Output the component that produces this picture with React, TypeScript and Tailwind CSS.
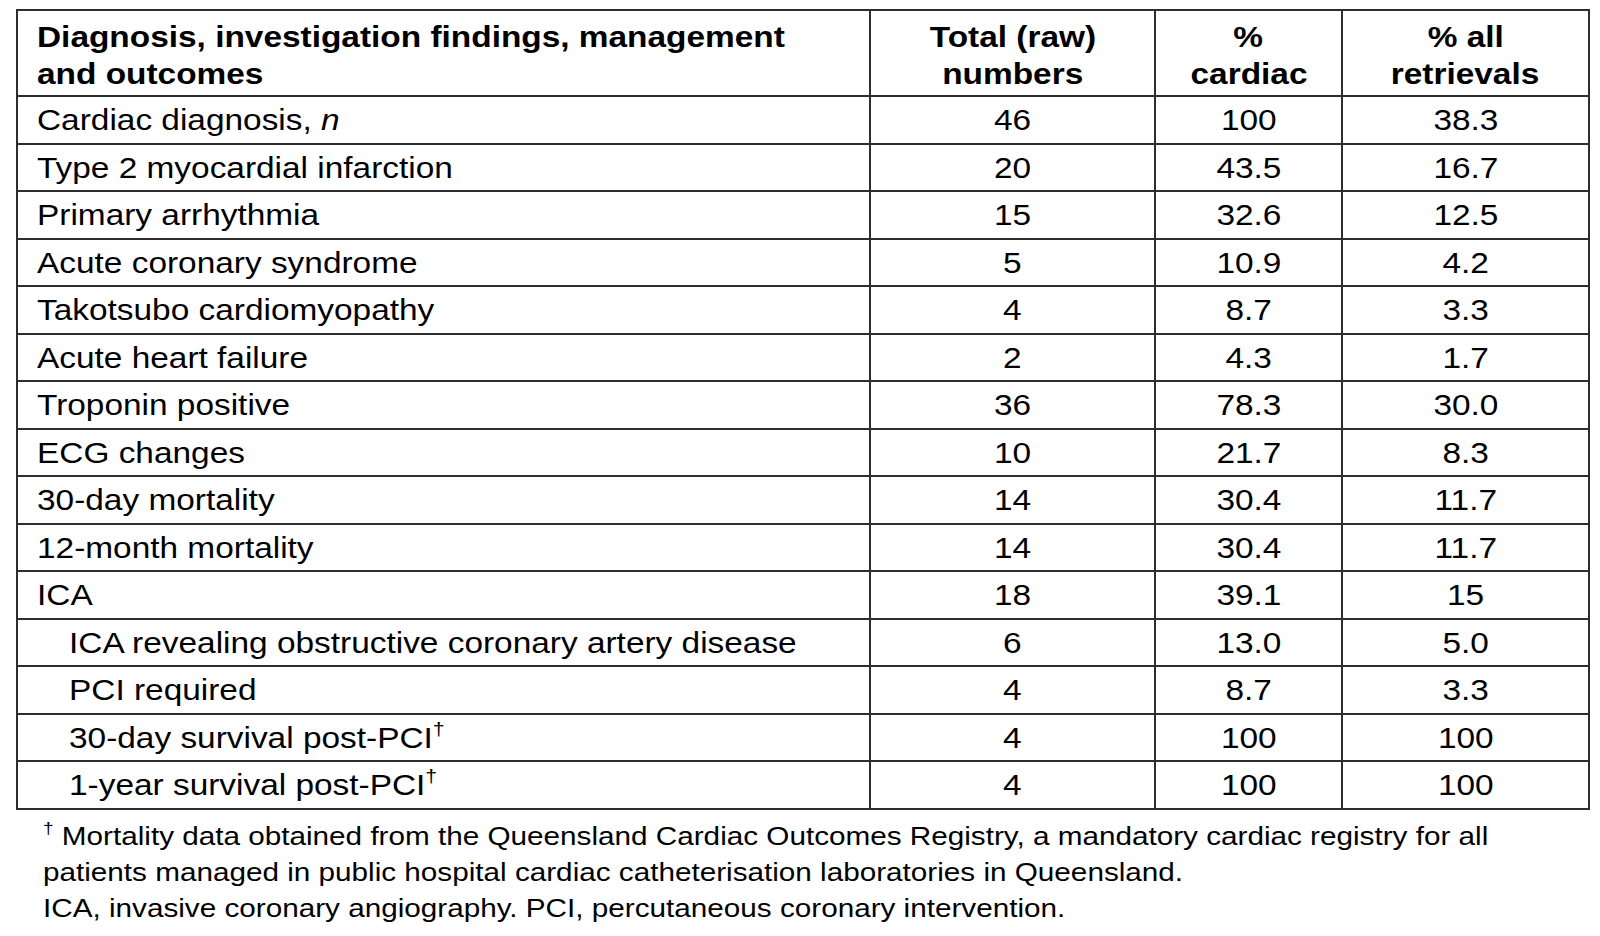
import React from 'react';

interface Row {
  label: React.ReactNode;
  total: string;
  cardiac: string;
  all: string;
  indent?: boolean;
}

const Dagger: React.FC = () => (
  <sup className="relative -top-[2px] text-[19px] leading-none align-super">†</sup>
);

const rows: Row[] = [
  { label: <>Cardiac diagnosis, <i>n</i></>, total: '46', cardiac: '100', all: '38.3' },
  { label: 'Type 2 myocardial infarction', total: '20', cardiac: '43.5', all: '16.7' },
  { label: 'Primary arrhythmia', total: '15', cardiac: '32.6', all: '12.5' },
  { label: 'Acute coronary syndrome', total: '5', cardiac: '10.9', all: '4.2' },
  { label: 'Takotsubo cardiomyopathy', total: '4', cardiac: '8.7', all: '3.3' },
  { label: 'Acute heart failure', total: '2', cardiac: '4.3', all: '1.7' },
  { label: 'Troponin positive', total: '36', cardiac: '78.3', all: '30.0' },
  { label: 'ECG changes', total: '10', cardiac: '21.7', all: '8.3' },
  { label: '30-day mortality', total: '14', cardiac: '30.4', all: '11.7' },
  { label: '12-month mortality', total: '14', cardiac: '30.4', all: '11.7' },
  { label: 'ICA', total: '18', cardiac: '39.1', all: '15' },
  { label: 'ICA revealing obstructive coronary artery disease', total: '6', cardiac: '13.0', all: '5.0', indent: true },
  { label: 'PCI required', total: '4', cardiac: '8.7', all: '3.3', indent: true },
  { label: <>30-day survival post-PCI<Dagger /></>, total: '4', cardiac: '100', all: '100', indent: true },
  { label: <>1-year survival post-PCI<Dagger /></>, total: '4', cardiac: '100', all: '100', indent: true },
];

// the source figure is stretched sideways, so glyphs get a horizontal scale
const wide = 'inline-block scale-x-[1.125]';
const cell = 'flex items-center border-r-2 border-b-2 border-[#2e2e2e] h-[47.5px]';
const numCell = `${cell} justify-center`;
const note = 'inline-block origin-left scale-x-[1.12] whitespace-nowrap';

const App: React.FC = () => {
  return (
    <div className="min-h-screen w-full bg-white text-black font-['Liberation_Sans',Arial,sans-serif]">
      <div className="pt-[9px] pl-[16px]">
        <div className="grid w-[1574px] grid-cols-[853px_285px_187px_247px] border-l-2 border-t-2 border-[#2e2e2e] text-[29.7px] leading-[37px]">
          <div className="flex h-[86px] flex-col justify-center border-r-2 border-b-2 border-[#2e2e2e] pl-[19px] pt-[3px] font-bold">
            <span className={`${wide} origin-left`}>Diagnosis, investigation findings, management</span>
            <span className={`${wide} origin-left`}>and outcomes</span>
          </div>
          <div className="flex h-[86px] flex-col items-center justify-center border-r-2 border-b-2 border-[#2e2e2e] pt-[3px] font-bold">
            <span className={wide}>Total (raw)</span>
            <span className={wide}>numbers</span>
          </div>
          <div className="flex h-[86px] flex-col items-center justify-center border-r-2 border-b-2 border-[#2e2e2e] pt-[3px] font-bold">
            <span className={wide}>%</span>
            <span className={wide}>cardiac</span>
          </div>
          <div className="flex h-[86px] flex-col items-center justify-center border-r-2 border-b-2 border-[#2e2e2e] pt-[3px] font-bold">
            <span className={wide}>% all</span>
            <span className={wide}>retrievals</span>
          </div>

          {rows.map((r, i) => (
            <React.Fragment key={i}>
              <div className={`${cell} ${r.indent ? 'pl-[51px]' : 'pl-[19px]'}`}>
                <span className={`${wide} origin-left whitespace-nowrap`}>{r.label}</span>
              </div>
              <div className={numCell}>
                <span className={wide}>{r.total}</span>
              </div>
              <div className={numCell}>
                <span className={wide}>{r.cardiac}</span>
              </div>
              <div className={numCell}>
                <span className={wide}>{r.all}</span>
              </div>
            </React.Fragment>
          ))}
        </div>

        <div className="mt-[8px] pl-[27px] text-[26.5px] leading-[36px]">
          <div>
            <span className={note}>
              <sup className="relative -top-[1px] text-[17px] leading-none align-super">†</sup> Mortality data obtained from the Queensland Cardiac Outcomes Registry, a mandatory cardiac registry for all
            </span>
          </div>
          <div>
            <span className={note}>
              patients managed in public hospital cardiac catheterisation laboratories in Queensland.
            </span>
          </div>
          <div>
            <span className={note}>
              ICA, invasive coronary angiography. PCI, percutaneous coronary intervention.
            </span>
          </div>
        </div>
      </div>
    </div>
  );
};

export default App;
